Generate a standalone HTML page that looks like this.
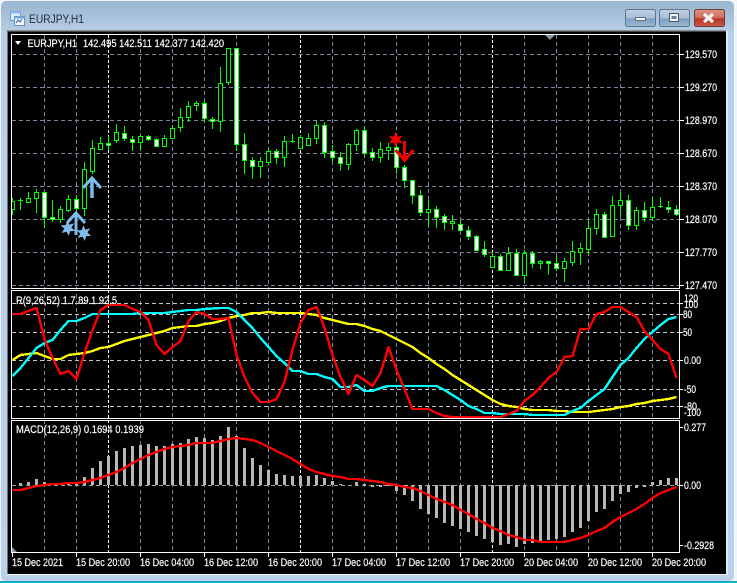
<!DOCTYPE html>
<html><head><meta charset="utf-8"><title>EURJPY,H1</title>
<style>
html,body{margin:0;padding:0;background:#fff;width:737px;height:583px;overflow:hidden}
svg{display:block}
text{font-family:"Liberation Sans",sans-serif;font-size:11px;fill:#fff;stroke:#fff;stroke-width:.2}
</style></head><body>
<svg width="737" height="583" viewBox="0 0 737 583" xmlns="http://www.w3.org/2000/svg">
<defs>
<linearGradient id="win" x1="0" y1="0" x2="0" y2="1"><stop offset="0" stop-color="#9bb6d0"/><stop offset=".055" stop-color="#b6cee6"/><stop offset="1" stop-color="#b9d1e9"/></linearGradient>
<linearGradient id="btn" x1="0" y1="0" x2="0" y2="1"><stop offset="0" stop-color="#c2d2e2"/><stop offset=".5" stop-color="#a9bfd6"/><stop offset=".55" stop-color="#7f9fc0"/><stop offset="1" stop-color="#9bb8d4"/></linearGradient>
<linearGradient id="cls" x1="0" y1="0" x2="0" y2="1"><stop offset="0" stop-color="#dc9488"/><stop offset=".5" stop-color="#cc6a5c"/><stop offset=".55" stop-color="#b83222"/><stop offset="1" stop-color="#c85a48"/></linearGradient>
<clipPath id="mc"><rect x="12" y="35" width="667" height="253"/></clipPath>
<clipPath id="ic"><rect x="12" y="291" width="667" height="127"/></clipPath>
<clipPath id="gc"><rect x="12" y="421" width="667" height="131"/></clipPath>
</defs>
<rect x="0" y="0" width="737" height="583" fill="#f2f5f8"/>
<rect x="1" y="1" width="733" height="580" rx="5" fill="url(#win)"/>
<rect x="0" y="581" width="737" height="2" fill="#1ca8c8"/>
<rect x="726" y="31" width="2" height="543" fill="#dfeaf5"/>
<rect x="7" y="574" width="721" height="1" fill="#eef3f9"/>

<!-- title -->
<rect x="10.5" y="11.5" width="10" height="9" fill="#dcebfa" stroke="#6f9fd0"/>
<rect x="10.5" y="11.5" width="10" height="2" fill="#8fbce8"/>
<rect x="14.5" y="16.5" width="10" height="9" fill="#f4f9ff" stroke="#6f8fb8"/>
<rect x="14.5" y="16.5" width="10" height="2" fill="#6fa8e0"/>
<path d="M16 23l2-3 2 2 2-3" fill="none" stroke="#3a5f90"/>
<text x="29" y="23" style="font-size:12px;fill:#22303e;stroke:none" textLength="55" lengthAdjust="spacingAndGlyphs">EURJPY,H1</text>

<!-- buttons -->
<rect x="625.5" y="9.5" width="30" height="17" rx="2" fill="url(#btn)" stroke="#5f738c"/>
<rect x="635.5" y="17.5" width="10" height="3" fill="#f4f4f4" stroke="#5f6f80"/>
<rect x="659.5" y="9.5" width="30" height="17" rx="2" fill="url(#btn)" stroke="#5f738c"/>
<rect x="669.5" y="13.5" width="9" height="8" fill="#f0f3f6" stroke="#4a5a6c"/>
<rect x="671.5" y="16" width="5" height="3" fill="#6f7f90"/>
<rect x="694.5" y="9.5" width="30" height="17" rx="2" fill="url(#cls)" stroke="#6a3a3a"/>
<path d="M704 14l9 8M713 14l-9 8" stroke="#f6f2f0" stroke-width="3.2" fill="none"/>

<!-- chart bg -->
<rect x="7" y="30" width="719" height="544" fill="#000"/>
<rect x="7" y="30" width="719" height="1.5" fill="#8a8f96"/>
<rect x="7" y="30" width="1" height="544" fill="#6a6f76"/>

<!-- vertical grid -->
<g shape-rendering="crispEdges" fill="none">
<path stroke="#77889c" stroke-dasharray="4 3" d="M44.5 35V552M76.5 35V552M140.5 35V552M172.5 35V552M204.5 35V552M236.5 35V552M268.5 35V552M332.5 35V552M364.5 35V552M396.5 35V552M428.5 35V552M460.5 35V552M524.5 35V552M556.5 35V552M588.5 35V552M620.5 35V552M652.5 35V552"/>
<path stroke="#fff" stroke-dasharray="3 2" d="M108.5 35V552M300.5 35V552M492.5 35V552"/>
<path stroke="#77889c" stroke-dasharray="4 3" d="M12 54.5H679M12 87.5H679M12 120.5H679M12 153.5H679M12 186.5H679M12 219.5H679M12 252.5H679M12 285.5H679"/>
<path stroke="#c4c8cc" stroke-dasharray="4 3" d="M12 303.5H679M12 314.5H679M12 332.5H679M12 360.5H679M12 389.5H679M12 406.5H679"/>
<path stroke="#9aa2ac" stroke-dasharray="4 3" d="M12 485.5H679"/>
</g>

<!-- candles -->
<g clip-path="url(#mc)" shape-rendering="crispEdges" fill="none" stroke="#00ff00">
<path d="M12.5 198V215M20.5 198V210M28.5 192V203M36.5 189V213M44.5 192V228M52.5 200V222M60.5 206V223M68.5 195V212M76.5 195V212M84.5 162V216M92.5 140V174M100.5 137V150M108.5 136V150M116.5 124V143M124.5 126V141M132.5 136V151M140.5 135V150M148.5 135V141M156.5 138V147M164.5 135V147M172.5 125V139M180.5 108V132M188.5 101V122M196.5 101V111M204.5 101V123M212.5 117V129M220.5 67V132M228.5 48V85M236.5 48V151M244.5 133V174M252.5 157V179M260.5 157V178M268.5 147V165M276.5 149V164M284.5 136V167M292.5 134V143M300.5 135V149M308.5 133V146M316.5 121V144M324.5 122V158M332.5 145V162M340.5 152V171M348.5 143V170M356.5 129V151M364.5 127V156M372.5 148V161M380.5 142V163M388.5 143V160M396.5 143V174M404.5 165V188M412.5 180V204M420.5 190V216M428.5 200V226M436.5 206V228M444.5 214V230M452.5 215V230M460.5 220V231M468.5 226V240M476.5 235V251M484.5 241V257M492.5 252V267M500.5 254V271M508.5 247V271M516.5 249V276M524.5 250V282M532.5 251V268M540.5 260V269M548.5 261V275M556.5 256V271M564.5 258V282M572.5 241V266M580.5 243V265M588.5 220V254M596.5 209V235M604.5 212V238M612.5 196V237M620.5 192V217M628.5 195V230M636.5 207V230M644.5 202V222M652.5 197V221M660.5 197V208M668.5 201V213M676.5 205V216M18 200.5H23M290 141.5H295M658 206.5H663"/>
<path fill="#000" d="M10.5 201.5h4v8h-4zM26.5 198.5h4v4h-4zM34.5 192.5h4v6h-4zM58.5 209.5h4v10h-4zM66.5 199.5h4v11h-4zM82.5 169.5h4v39h-4zM90.5 148.5h4v23h-4zM98.5 143.5h4v6h-4zM114.5 132.5h4v8h-4zM138.5 136.5h4v6h-4zM162.5 138.5h4v8h-4zM170.5 128.5h4v10h-4zM178.5 117.5h4v10h-4zM186.5 106.5h4v11h-4zM194.5 103.5h4v2h-4zM218.5 83.5h4v38h-4zM226.5 48.5h4v34h-4zM258.5 161.5h4v5h-4zM266.5 151.5h4v11h-4zM282.5 141.5h4v16h-4zM298.5 137.5h4v11h-4zM306.5 138.5h4v7h-4zM314.5 125.5h4v13h-4zM346.5 144.5h4v20h-4zM354.5 130.5h4v14h-4zM378.5 149.5h4v8h-4zM386.5 147.5h4v3h-4zM426.5 209.5h4v3h-4zM450.5 221.5h4v2h-4zM490.5 256.5h4v11h-4zM506.5 253.5h4v17h-4zM522.5 253.5h4v22h-4zM538.5 261.5h4v2h-4zM562.5 261.5h4v7h-4zM570.5 251.5h4v11h-4zM578.5 248.5h4v4h-4zM586.5 228.5h4v21h-4zM594.5 214.5h4v14h-4zM610.5 205.5h4v31h-4zM618.5 200.5h4v5h-4zM634.5 210.5h4v15h-4zM650.5 207.5h4v10h-4z"/>
<path fill="#fff" d="M42.5 192.5h4v25h-4zM50.5 217.5h4v2h-4zM74.5 199.5h4v9h-4zM106.5 143.5h4v2h-4zM122.5 133.5h4v5h-4zM130.5 139.5h4v3h-4zM146.5 136.5h4v3h-4zM154.5 139.5h4v7h-4zM202.5 103.5h4v15h-4zM210.5 119.5h4v2h-4zM234.5 48.5h4v96h-4zM242.5 144.5h4v16h-4zM250.5 160.5h4v6h-4zM274.5 151.5h4v6h-4zM322.5 125.5h4v27h-4zM330.5 151.5h4v6h-4zM338.5 157.5h4v6h-4zM362.5 130.5h4v23h-4zM370.5 152.5h4v5h-4zM394.5 147.5h4v20h-4zM402.5 167.5h4v13h-4zM410.5 180.5h4v15h-4zM418.5 195.5h4v17h-4zM434.5 209.5h4v8h-4zM442.5 216.5h4v6h-4zM458.5 224.5h4v6h-4zM466.5 230.5h4v6h-4zM474.5 236.5h4v14h-4zM482.5 249.5h4v5h-4zM498.5 256.5h4v14h-4zM514.5 253.5h4v22h-4zM530.5 253.5h4v10h-4zM546.5 261.5h4v2h-4zM554.5 263.5h4v5h-4zM602.5 214.5h4v23h-4zM626.5 200.5h4v25h-4zM642.5 210.5h4v7h-4zM666.5 207.5h4v2h-4zM674.5 209.5h4v5h-4z"/>
</g>

<!-- signals -->
<g fill="none" stroke="#7dbcec" stroke-width="3">
<path d="M83 188L92 178L101 188"/>
<path d="M92 178V198" stroke-width="3.5"/>
<path d="M67 223L76 213L85 223"/>
<path d="M76 213V235" stroke-width="3"/>
</g>
<g fill="#7dbcec">
<path d="M67.5 220l1.8 4.6 4.9-1.4-2.7 4.3 3.6 3.4-5 .3-1.2 4.8-2.4-4.3-4.9 1.3 2.7-4.2-3.6-3.5 5-.2z"/>
<path d="M83.5 225l1.8 4.6 4.9-1.4-2.7 4.3 3.6 3.4-5 .3-1.2 4.8-2.4-4.3-4.9 1.3 2.7-4.2-3.6-3.5 5-.2z"/>
</g>
<path d="M395.7 132l1.9 4.5 4.9-.8-3 3.8 3 3.9-4.9-.8-1.9 4.6-1.9-4.6-4.9.8 3-3.9-3-3.8 4.9.8z" fill="#f00000"/>
<g fill="none" stroke="#f00000" stroke-width="3">
<path d="M395.5 150L404.5 160.5L413.5 150"/>
<path d="M404.5 141V161"/>
</g>

<!-- indicator lines -->
<g clip-path="url(#ic)" fill="none" stroke-width="2.4" shape-rendering="crispEdges" stroke-linejoin="round">
<polyline stroke="#ffff00" points="12.5,360 20.5,355 28.5,354 36.5,353 44.5,356 52.5,359 60.5,359 68.5,355 76.5,354 84.5,353 92.5,351 100.5,348 108.5,347 116.5,344 124.5,341 132.5,339 140.5,337 148.5,335 156.5,333 164.5,331 172.5,328 180.5,327 188.5,326 196.5,326 204.5,324 212.5,323 220.5,321 228.5,318 236.5,316 244.5,315 252.5,313 260.5,313 268.5,312 276.5,313 284.5,313 292.5,313 300.5,313 308.5,314 316.5,315 324.5,318 332.5,320 340.5,322 348.5,324 356.5,324 364.5,326 372.5,329 380.5,331 388.5,335 396.5,339 404.5,343 412.5,347 420.5,353 428.5,358 436.5,364 444.5,369 452.5,375 460.5,380 468.5,385 476.5,390 484.5,395 492.5,400 500.5,404 508.5,406 516.5,407 524.5,409 532.5,410 540.5,410 548.5,410 556.5,411 564.5,411 572.5,412 580.5,412 588.5,412 596.5,411 604.5,410 612.5,409 620.5,407 628.5,406 636.5,404 644.5,403 652.5,401 660.5,400 668.5,399 676.5,397"/>
<polyline stroke="#00ffff" points="12.5,376 20.5,368 28.5,358 36.5,348 44.5,343 52.5,340 60.5,330 68.5,321 76.5,321 84.5,318 92.5,314 100.5,314 108.5,314 116.5,314 124.5,314 132.5,314 140.5,313 148.5,313 156.5,313 164.5,313 172.5,312 180.5,311 188.5,310 196.5,310 204.5,309 212.5,308.5 220.5,308 228.5,308 236.5,312 244.5,320 252.5,328 260.5,338 268.5,347 276.5,356 284.5,363 292.5,371 300.5,371 308.5,374 316.5,374 324.5,377 332.5,379 340.5,387 348.5,387 356.5,385 364.5,391 372.5,391 380.5,388 388.5,386 396.5,386 404.5,386 412.5,386 420.5,386 428.5,386 436.5,386 444.5,390 452.5,395 460.5,400 468.5,406 476.5,409 484.5,413 492.5,413 500.5,414 508.5,414 516.5,414 524.5,414 532.5,415 540.5,415 548.5,415 556.5,415 564.5,415 572.5,411 580.5,408 588.5,401 596.5,395 604.5,389 612.5,377 620.5,365 628.5,358 636.5,348 644.5,339 652.5,332 660.5,325 668.5,319 676.5,317"/>
<polyline stroke="#ff0000" points="12.5,314 20.5,314 28.5,311 36.5,308 44.5,339 52.5,358 60.5,374 68.5,371 76.5,379 84.5,353 92.5,330 100.5,310 108.5,305 116.5,305 124.5,305 132.5,309 140.5,312 148.5,320 156.5,345 164.5,354 172.5,347 180.5,341 188.5,321 196.5,312 204.5,314 212.5,319 220.5,319 228.5,318 236.5,355 244.5,377 252.5,393 260.5,402 268.5,402 276.5,399 284.5,382 292.5,350 300.5,323 308.5,310 316.5,307 324.5,328 332.5,355 340.5,377 348.5,394 356.5,375 364.5,380 372.5,386 380.5,373 388.5,347 396.5,370 404.5,389 412.5,409 420.5,409 428.5,409 436.5,413 444.5,416 452.5,417 460.5,417 468.5,417 476.5,417 484.5,417 492.5,417 500.5,417 508.5,414 516.5,411 524.5,401 532.5,395 540.5,387 548.5,378 556.5,372 564.5,357 572.5,356 580.5,329 588.5,329 596.5,314 604.5,312 612.5,307 620.5,307 628.5,312 636.5,317 644.5,331 652.5,340 660.5,349 668.5,354 676.5,378"/>
</g>

<!-- MACD -->
<g clip-path="url(#gc)" shape-rendering="crispEdges" fill="none">
<path stroke="#b8b8b8" stroke-width="3" d="M20.5 485V483M28.5 485V482M36.5 485V479M44.5 485V482M60.5 485V484M68.5 485V482M76.5 485V482M84.5 485V477M92.5 485V468M100.5 485V461M108.5 485V456M116.5 485V451M124.5 485V448M132.5 485V446M140.5 485V445M148.5 485V444M156.5 485V446M164.5 485V446M172.5 485V444M180.5 485V443M188.5 485V439M196.5 485V437M204.5 485V438M212.5 485V440M220.5 485V436M228.5 485V427M236.5 485V436M244.5 485V448M252.5 485V458M260.5 485V465M268.5 485V470M276.5 485V474M284.5 485V475M292.5 485V476M300.5 485V476M308.5 485V476M316.5 485V475M324.5 485V478M332.5 485V481M340.5 485V484M356.5 485V482M364.5 485V484M372.5 485V487M380.5 485V487M388.5 485V486M396.5 485V491M404.5 485V495M412.5 485V501M420.5 485V509M428.5 485V514M436.5 485V518M444.5 485V523M452.5 485V526M460.5 485V529M468.5 485V532M476.5 485V536M484.5 485V539M492.5 485V542M500.5 485V545M508.5 485V544M516.5 485V547M524.5 485V544M532.5 485V543M540.5 485V541M548.5 485V540M556.5 485V539M564.5 485V537M572.5 485V532M580.5 485V528M588.5 485V521M596.5 485V512M604.5 485V509M612.5 485V501M620.5 485V494M628.5 485V492M636.5 485V488M644.5 485V487M652.5 485V482M660.5 485V480M668.5 485V478M676.5 485V478"/>
<polyline stroke="#ff0000" stroke-width="2.4" points="12.5,490 20.5,490 28.5,488 36.5,486 44.5,485 52.5,484 60.5,484 68.5,483 76.5,483 84.5,482 92.5,480 100.5,478 108.5,475 116.5,472 124.5,468 132.5,463 140.5,459 148.5,455 156.5,452 164.5,449 172.5,447 180.5,446 188.5,445 196.5,443 204.5,443 212.5,443 220.5,441 228.5,439 236.5,438 244.5,439 252.5,440 260.5,443 268.5,447 276.5,451 284.5,455 292.5,459 300.5,464 308.5,469 316.5,472 324.5,474 332.5,476 340.5,477 348.5,479 356.5,479 364.5,480 372.5,481 380.5,482 388.5,484 396.5,485 404.5,487 412.5,488 420.5,491 428.5,495 436.5,499 444.5,502 452.5,505 460.5,510 468.5,514 476.5,519 484.5,523 492.5,528 500.5,531 508.5,535 516.5,537 524.5,540 532.5,540 540.5,542 548.5,542 556.5,542 564.5,542 572.5,540 580.5,538 588.5,535 596.5,531 604.5,528 612.5,522 620.5,517 628.5,513 636.5,509 644.5,504 652.5,498 660.5,493 668.5,490 676.5,487"/>
</g>

<!-- frames -->
<g shape-rendering="crispEdges" fill="none" stroke="#fff">
<path d="M11.5 34.5H679.5V288.5H11.5Z"/>
<path d="M11.5 290.5H679.5V418.5H11.5Z"/>
<path d="M11.5 420.5H679.5V552.5H11.5Z"/>
<path d="M680 54.5h4M680 87.5h4M680 120.5h4M680 153.5h4M680 186.5h4M680 219.5h4M680 252.5h4M680 285.5h4"/>
<path d="M680 303.5h3M680 314.5h3M680 332.5h3M680 360.5h3M680 389.5h3M680 406.5h3M680 427.5h3M680 485.5h3M680 545.5h3"/>
<path d="M12.5 553v4M76.5 553v4M140.5 553v4M204.5 553v4M268.5 553v4M332.5 553v4M396.5 553v4M460.5 553v4M524.5 553v4M588.5 553v4M652.5 553v4"/>
</g>
<path d="M545 35h10l-5 5z" fill="#8596aa"/>
<path d="M12 547l5 5h-5z" fill="#8596aa"/>
<path d="M15 41h6l-3 4z" fill="#fff"/>

<!-- legends -->
<text x="27.5" y="47" textLength="49.5" lengthAdjust="spacingAndGlyphs">EURJPY,H1</text>
<text x="83" y="47" textLength="141" lengthAdjust="spacingAndGlyphs">142.495 142.511 142.377 142.420</text>
<text x="16" y="304" textLength="101" lengthAdjust="spacingAndGlyphs">R(9,26,52) 1.7 89.1 92.5</text>
<text x="16" y="433" textLength="128" lengthAdjust="spacingAndGlyphs">MACD(12,26,9) 0.1694 0.1939</text>

<!-- price axis -->
<g>
<text x="685" y="58" textLength="32" lengthAdjust="spacingAndGlyphs">129.570</text>
<text x="685" y="91" textLength="32" lengthAdjust="spacingAndGlyphs">129.270</text>
<text x="685" y="124" textLength="32" lengthAdjust="spacingAndGlyphs">128.970</text>
<text x="685" y="157" textLength="32" lengthAdjust="spacingAndGlyphs">128.670</text>
<text x="685" y="190" textLength="32" lengthAdjust="spacingAndGlyphs">128.370</text>
<text x="685" y="223" textLength="32" lengthAdjust="spacingAndGlyphs">128.070</text>
<text x="685" y="256" textLength="32" lengthAdjust="spacingAndGlyphs">127.770</text>
<text x="685" y="289" textLength="32" lengthAdjust="spacingAndGlyphs">127.470</text>
<text x="684" y="302" textLength="14" lengthAdjust="spacingAndGlyphs">120</text>
<text x="684" y="308" textLength="14" lengthAdjust="spacingAndGlyphs">100</text>
<text x="683" y="318" textLength="9" lengthAdjust="spacingAndGlyphs">80</text>
<text x="683" y="336" textLength="9" lengthAdjust="spacingAndGlyphs">50</text>
<text x="684" y="364" textLength="17" lengthAdjust="spacingAndGlyphs">0.00</text>
<text x="684" y="393" textLength="12" lengthAdjust="spacingAndGlyphs">-50</text>
<text x="684" y="410" textLength="13" lengthAdjust="spacingAndGlyphs">-80</text>
<text x="684" y="416" textLength="17" lengthAdjust="spacingAndGlyphs">-100</text>
<text x="684" y="431" textLength="22" lengthAdjust="spacingAndGlyphs">0.277</text>
<text x="684" y="489" textLength="17" lengthAdjust="spacingAndGlyphs">0.00</text>
<text x="684" y="549" textLength="30" lengthAdjust="spacingAndGlyphs">-0.2928</text>
</g>

<!-- time axis -->
<g>
<text x="12" y="566" textLength="51" lengthAdjust="spacingAndGlyphs">15 Dec 2021</text>
<text x="76" y="566" textLength="54" lengthAdjust="spacingAndGlyphs">15 Dec 20:00</text>
<text x="140" y="566" textLength="54" lengthAdjust="spacingAndGlyphs">16 Dec 04:00</text>
<text x="204" y="566" textLength="54" lengthAdjust="spacingAndGlyphs">16 Dec 12:00</text>
<text x="268" y="566" textLength="54" lengthAdjust="spacingAndGlyphs">16 Dec 20:00</text>
<text x="332" y="566" textLength="54" lengthAdjust="spacingAndGlyphs">17 Dec 04:00</text>
<text x="396" y="566" textLength="54" lengthAdjust="spacingAndGlyphs">17 Dec 12:00</text>
<text x="460" y="566" textLength="54" lengthAdjust="spacingAndGlyphs">17 Dec 20:00</text>
<text x="524" y="566" textLength="54" lengthAdjust="spacingAndGlyphs">20 Dec 04:00</text>
<text x="588" y="566" textLength="54" lengthAdjust="spacingAndGlyphs">20 Dec 12:00</text>
<text x="652" y="566" textLength="54" lengthAdjust="spacingAndGlyphs">20 Dec 20:00</text>
</g>
</svg>
</body></html>
